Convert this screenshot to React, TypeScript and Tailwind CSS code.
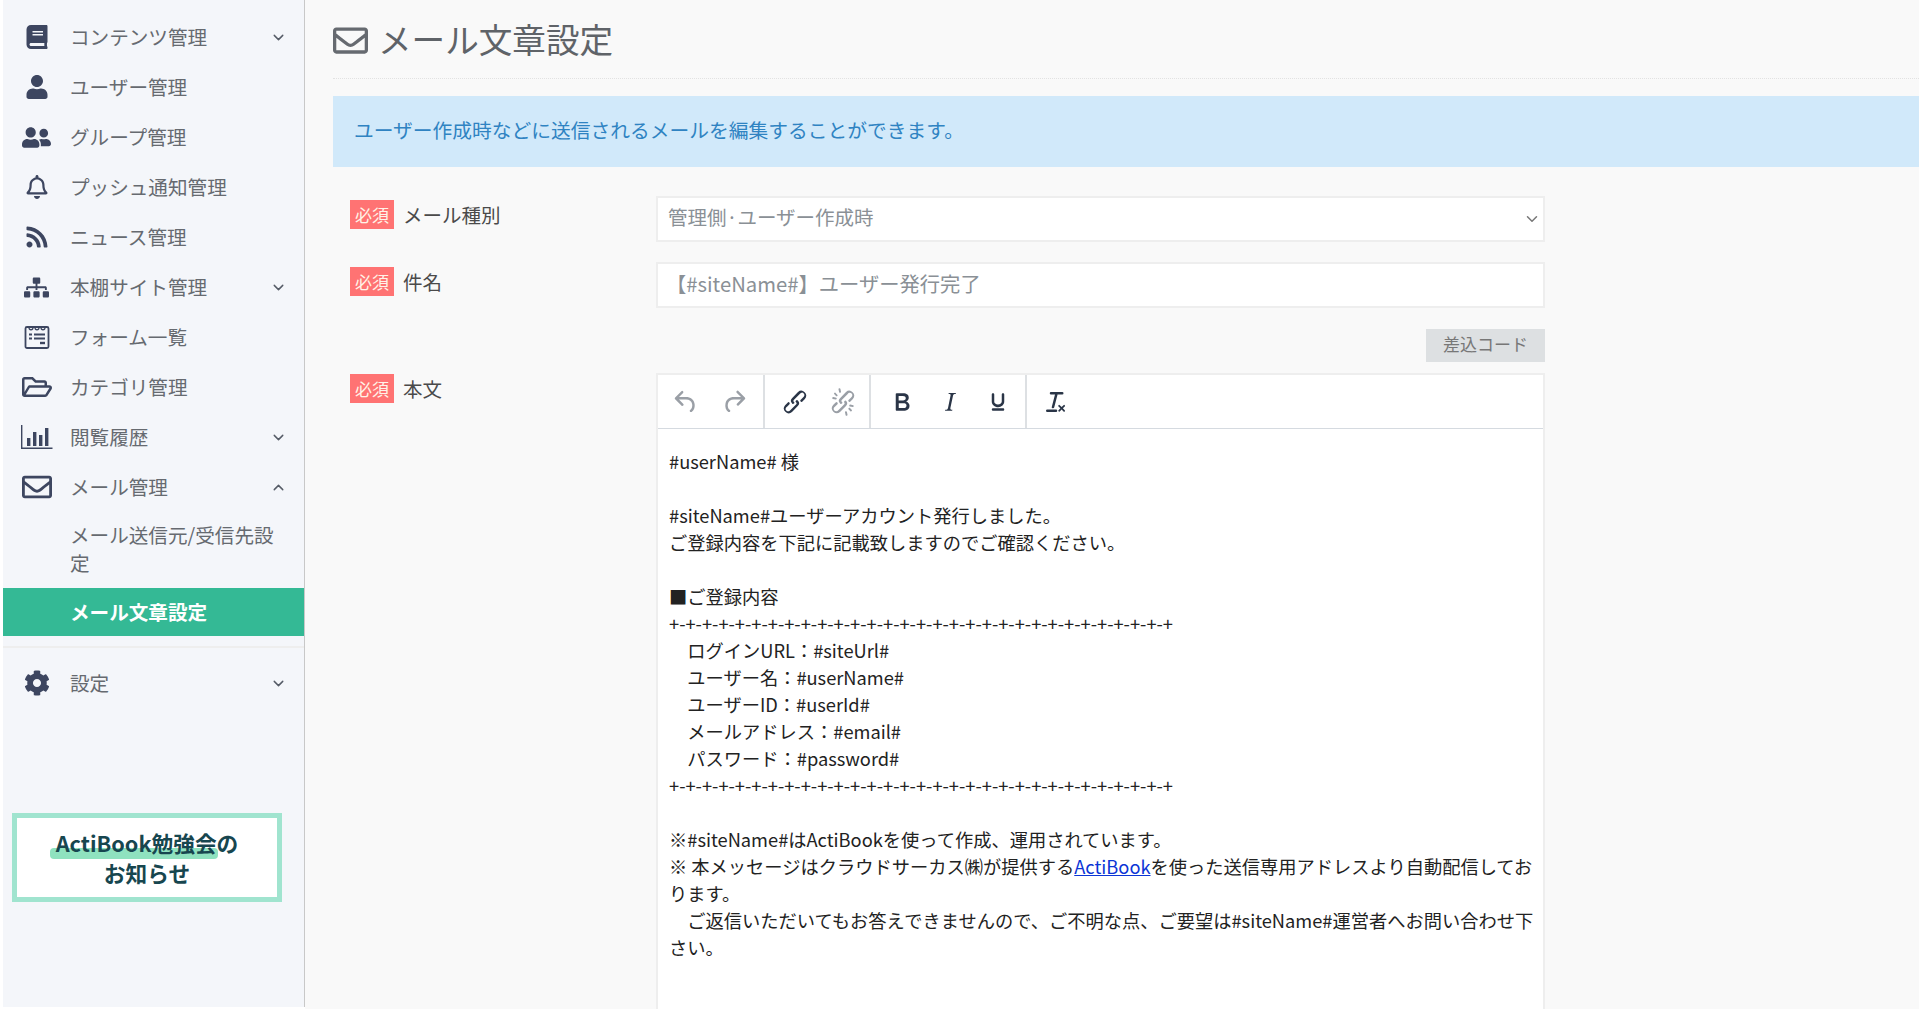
import { useState } from 'react';
import {
    FaBook,
    FaUser,
    FaUserFriends,
    FaRegBell,
    FaRss,
    FaSitemap,
    FaRegFolderOpen,
    FaRegEnvelope,
    FaCog,
} from 'react-icons/fa';
import { ChevronDown, ChevronUp } from 'lucide-react';

const JP = "font-['Noto_Sans_CJK_JP','Noto_Sans',sans-serif]";

function FormIcon() {
    return (
        <svg width="26" height="25" viewBox="0 0 26 25" fill="none" stroke="currentColor" strokeWidth="1.8">
            <rect x="1.5" y="2" width="23" height="21" rx="1.5" />
            <path d="M5 2.5c0 3 4 3 4 0M11 2.5c0 3 4 3 4 0M17 2.5c0 3 4 3 4 0" strokeWidth="1.3" />
            <path d="M5 9.5h3M10 9.5h11M5 13.5h3M10 13.5h11" strokeWidth="1.8" />
            <path d="M16 18h5" strokeWidth="2.4" />
        </svg>
    );
}

function ChartIcon() {
    return (
        <svg width="33" height="25" viewBox="0 0 33 25" fill="currentColor">
            <path d="M1 0h1.4v22.6H32.5V24H1z" />
            <rect x="7" y="13" width="3.4" height="8" />
            <rect x="13" y="7" width="3.4" height="14" />
            <rect x="19" y="10" width="3.4" height="11" />
            <rect x="25" y="3" width="3.4" height="18" />
        </svg>
    );
}

const navItems = [
    { label: 'コンテンツ管理', icon: <FaBook size={24} />, chevron: 'down' },
    { label: 'ユーザー管理', icon: <FaUser size={24} /> },
    { label: 'グループ管理', icon: <FaUserFriends size={29} /> },
    { label: 'プッシュ通知管理', icon: <FaRegBell size={24} /> },
    { label: 'ニュース管理', icon: <FaRss size={24} /> },
    { label: '本棚サイト管理', icon: <FaSitemap size={25} />, chevron: 'down' },
    { label: 'フォーム一覧', icon: <FormIcon /> },
    { label: 'カテゴリ管理', icon: <FaRegFolderOpen size={30} /> },
    { label: '閲覧履歴', icon: <ChartIcon />, chevron: 'down' },
    { label: 'メール管理', icon: <FaRegEnvelope size={30} />, chevron: 'up' },
];

function NavRow({ label, icon, chevron }: { label: string; icon: React.ReactNode; chevron?: string }) {
    return (
        <div className="h-[50px] flex items-center">
            <div className="w-[67px] flex justify-center items-center text-[#3d4660]">{icon}</div>
            <span className="flex-1 text-[19.6px] text-[#666a70] pb-[1px]">{label}</span>
            {chevron === 'down' && <ChevronDown className="w-[17px] h-[17px] mr-[17px] text-[#555b66]" />}
            {chevron === 'up' && <ChevronUp className="w-[17px] h-[17px] mr-[17px] text-[#555b66]" />}
        </div>
    );
}

function Sidebar() {
    return (
        <aside className="w-[302px] shrink-0 ml-[3px] mb-[2px] bg-[#f4f6fa] border-r border-[#c8c8c8] pt-[12px] flex flex-col">
            {navItems.map((item) => (
                <NavRow key={item.label} {...item} />
            ))}
            <div className="pl-[67px] pr-[20px] pt-[9px] pb-[11px] text-[19.6px] leading-[28px] text-[#666a70]">
                メール送信元/受信先設定
            </div>
            <div className="h-[48px] flex items-center pl-[67px] pb-[1px] bg-[#34b995] text-white text-[19.6px] font-bold">
                メール文章設定
            </div>
            <div className="mt-[10px] border-t-2 border-[#eeeeee]" />
            <div className="mt-[10px]">
                <NavRow label="設定" icon={<FaCog size={26} />} chevron="down" />
            </div>
            <div className="mt-[105px] ml-[9px] w-[270px] h-[89px] border-[5px] border-[#a0e4cf] bg-white flex flex-col items-center justify-center text-[21.7px] leading-[30px] font-bold text-[#17464f]">
                <span className="relative">
                    <span className="absolute left-[-6px] top-[20px] w-[168px] h-[11px] bg-[#8fe2bf] rounded-sm" />
                    <span className="relative">ActiBook勉強会の</span>
                </span>
                <span>お知らせ</span>
            </div>
        </aside>
    );
}

function RequiredLabel({ text }: { text: string }) {
    return (
        <div className="w-[323px] pl-[17px] flex items-center gap-[9px] h-[29px] shrink-0">
            <span className="w-[44px] h-[29px] bg-[#ff7373] text-[#fff3e8] text-[17px] flex items-center justify-center">必須</span>
            <span className="text-[19.5px] text-[#4a4a4a] pt-[1px]">{text}</span>
        </div>
    );
}

const toolIcons = {
    undo: 'M6.4 8H12c3.7 0 6.2 2 6.8 5.1.6 2.7-.4 5.6-2.3 6.8a1 1 0 0 1-1-1.8c1.1-.6 1.8-2.7 1.4-4.6-.5-2.1-2.1-3.5-4.9-3.5H6.4l3.3 3.3a1 1 0 1 1-1.4 1.4l-5-5a1 1 0 0 1 0-1.4l5-5a1 1 0 0 1 1.4 1.4L6.4 8z',
    redo: 'M17.6 10H12c-2.8 0-4.4 1.4-4.9 3.5-.4 2 .3 4 1.4 4.6a1 1 0 1 1-1 1.8c-2-1.2-2.9-4.1-2.3-6.8.6-3 3-5.1 6.8-5.1h5.6l-3.3-3.3a1 1 0 1 1 1.4-1.4l5 5a1 1 0 0 1 0 1.4l-5 5a1 1 0 0 1-1.4-1.4l3.3-3.3z',
    link: 'M6.2 12.3a1 1 0 0 1 1.4 1.4l-2 2a2 2 0 1 0 2.6 2.8l4.8-4.8a1 1 0 0 0 0-1.4 1 1 0 1 1 1.4-1.3 2.9 2.9 0 0 1 0 4L9.6 20a3.9 3.9 0 0 1-5.5-5.5l2-2zm11.6-.6a1 1 0 0 1-1.4-1.4l2-2a2 2 0 1 0-2.6-2.8L11 10.3a1 1 0 0 0 0 1.4A1 1 0 1 1 9.6 13a2.9 2.9 0 0 1 0-4L14.4 4a3.9 3.9 0 0 1 5.5 5.5l-2 2z',
    unlink: 'M6.2 12.3a1 1 0 0 1 1.4 1.4l-2.1 2a2 2 0 1 0 2.7 2.8l4.8-4.8a1 1 0 0 0 0-1.4 1 1 0 0 1 1.4-1.3 2.9 2.9 0 0 1 0 4.1l-4.8 4.8a3.9 3.9 0 0 1-5.5-5.5l2-2zm11.6-.6a1 1 0 0 1-1.4-1.4l2.1-2a2 2 0 1 0-2.7-2.8L11 10.3a1 1 0 0 0 0 1.4 1 1 0 1 1-1.4 1.3 2.9 2.9 0 0 1 0-4.1L14.4 4a3.9 3.9 0 0 1 5.5 5.5l-2 2zM7.6 6.3a.8.8 0 0 1-1 1.1L4.9 5.6a.8.8 0 0 1 1-1.1l1.7 1.8zm2.8-2.5a.8.8 0 0 1-1.5.4l-.5-2.4a.8.8 0 0 1 1.5-.4l.5 2.4zM6.6 8.5a.8.8 0 0 1-.4 1.5l-2.4-.5a.8.8 0 0 1 .4-1.5l2.4.5zm9.8 9.2a.8.8 0 0 1 1-1.1l1.7 1.8a.8.8 0 0 1-1 1.1l-1.7-1.8zm-2.8 2.5a.8.8 0 0 1 1.5-.4l.5 2.4a.8.8 0 0 1-1.5.4l-.5-2.4zm3.8-4.7a.8.8 0 0 1 .4-1.5l2.4.5a.8.8 0 0 1-.4 1.5l-2.4-.5z',
    bold: 'M7.8 19c-.3 0-.5 0-.6-.2l-.2-.5V5.7c0-.2 0-.4.2-.5l.6-.2h5c1.5 0 2.7.3 3.5 1 .7.6 1.1 1.4 1.1 2.5a3 3 0 0 1-.6 1.9c-.4.6-1 1-1.6 1.2.4.1.9.3 1.3.6s.8.7 1 1.2c.4.4.5 1 .5 1.6 0 1.3-.4 2.3-1.3 3-.8.7-2.1 1-3.8 1H7.8zm5-8.3c.6 0 1.2-.1 1.6-.5.4-.3.6-.7.6-1.3 0-1.1-.8-1.7-2.3-1.7H9.3v3.5h3.4zm.5 6c.7 0 1.3-.1 1.7-.4.4-.4.6-.9.6-1.5s-.2-1-.7-1.4c-.4-.3-1-.4-2-.4H9.4v3.8h4z',
    italic: 'M16.7 4.7l-.1.9h-.3c-.6 0-1 0-1.4.3-.3.3-.4.6-.5 1.1l-2.1 9.8v.6c0 .5.4.8 1.4.8h.2l-.2.8H8l.2-.8h.2c1.1 0 1.8-.5 2-1.5l2-9.8.1-.5c0-.6-.4-.8-1.4-.8h-.3l.2-.9h5.8z',
    underline: 'M16 5c.6 0 1 .4 1 1v5.5a4 4 0 0 1-.4 1.8l-1 1.4a5.3 5.3 0 0 1-5.5 1 5 5 0 0 1-1.6-1c-.5-.4-.8-.9-1.1-1.4a4 4 0 0 1-.4-1.8V6c0-.6.4-1 1-1s1 .4 1 1v5.5c0 .3 0 .6.2 1l.6.7a3.3 3.3 0 0 0 2.2.8 3.4 3.4 0 0 0 2.2-.8c.3-.2.4-.5.6-.8l.2-.9V6c0-.6.4-1 1-1zM8 17h8c.6 0 1 .4 1 1s-.4 1-1 1H8a1 1 0 0 1 0-2z',
    clear: 'M13.2 6a1 1 0 0 1 0 .2l-2.6 10a1 1 0 0 1-1 .8h-.2a.8.8 0 0 1-.8-1l2.6-10H8a1 1 0 1 1 0-2h9a1 1 0 0 1 0 2h-3.8zM5 18h7a1 1 0 0 1 0 2H5a1 1 0 0 1 0-2zm13 1.5L16.5 18 15 19.5a.7.7 0 0 1-1-1l1.5-1.5-1.5-1.5a.7.7 0 0 1 1-1l1.5 1.5 1.5-1.5a.7.7 0 0 1 1 1L17.5 17l1.5 1.5a.7.7 0 0 1-1 1z',
};

function ToolButton({ name, disabled }: { name: keyof typeof toolIcons; disabled?: boolean }) {
    return (
        <button className="w-[48px] h-[54px] flex items-center justify-center">
            <svg width="30" height="30" viewBox="0 0 24 24" className={disabled ? 'text-[#9a9fa6]' : 'text-[#2a3547]'} fill="currentColor">
                <path d={toolIcons[name]} fillRule="evenodd" />
            </svg>
        </button>
    );
}

function Editor() {
    const dashes = '+-'.repeat(30) + '+';
    return (
        <div className="flex-1 border-2 border-b-0 border-[#eeeeee] bg-white min-h-[800px]">
            <div className="h-[54px] flex border-b border-[#d5dae0]">
                <div className="flex pl-[4px] pr-[5px] border-r-2 border-[#dde0e3]">
                    <ToolButton name="undo" disabled />
                    <ToolButton name="redo" disabled />
                </div>
                <div className="flex pl-[6px] pr-[2px] border-r-2 border-[#dde0e3]">
                    <ToolButton name="link" />
                    <ToolButton name="unlink" disabled />
                </div>
                <div className="flex pl-[7px] pr-[3px] border-r-2 border-[#dde0e3]">
                    <ToolButton name="bold" />
                    <ToolButton name="italic" />
                    <ToolButton name="underline" />
                </div>
                <div className="flex pl-[5px]">
                    <ToolButton name="clear" />
                </div>
            </div>
            <div className="pl-[11px] pr-[8px] pt-[19px] text-[18.25px] leading-[27px] text-[#222222]">
                <p>#userName# 様</p>
                <p>&nbsp;</p>
                <p>#siteName#ユーザーアカウント発行しました。</p>
                <p>ご登録内容を下記に記載致しますのでご確認ください。</p>
                <p>&nbsp;</p>
                <p>■ご登録内容</p>
                <p>{dashes}</p>
                <p>　ログインURL：#siteUrl#</p>
                <p>　ユーザー名：#userName#</p>
                <p>　ユーザーID：#userId#</p>
                <p>　メールアドレス：#email#</p>
                <p>　パスワード：#password#</p>
                <p>{dashes}</p>
                <p>&nbsp;</p>
                <p>※#siteName#はActiBookを使って作成、運用されています。</p>
                <p>
                    ※ 本メッセージはクラウドサーカス㈱が提供する
                    <a className="text-[#0b35d6] underline">ActiBook</a>
                    を使った送信専用アドレスより自動配信しております。
                </p>
                <p>　ご返信いただいてもお答えできませんので、ご不明な点、ご要望は#siteName#運営者へお問い合わせ下さい。</p>
            </div>
        </div>
    );
}

export default function App() {
    const [mailType] = useState('管理側·ユーザー作成時');
    const [subject] = useState('【#siteName#】ユーザー発行完了');

    return (
        <div className={`h-[1009px] w-full flex bg-white overflow-hidden ${JP}`}>
            <Sidebar />
            <main className="flex-1 min-w-0 bg-[#f9f9f9] pl-[28px]">
                <h1 className="h-[79px] border-b border-dotted border-[#e2e2e2] flex items-center gap-[10px] text-[33.6px] text-[#5f6368]">
                    <FaRegEnvelope size={35} className="text-[#666a70] mt-[3px]" />
                    メール文章設定
                </h1>
                <div className="mt-[17px] h-[71px] flex items-center pl-[21px] pb-[4px] bg-[#d1e9fa] text-[19.75px] text-[#2f83c2]">
                    ユーザー作成時などに送信されるメールを編集することができます。
                </div>

                <div className="w-[1212px] pt-[29px]">
                    <div className="flex h-[46px]">
                        <div className="pt-[4px]"><RequiredLabel text="メール種別" /></div>
                        <div className="flex-1 flex items-center justify-between border-2 border-[#eeeeee] bg-white pl-[10px] pr-[2px] pb-[4px] text-[19.5px] text-[#8a9096]">
                            <span>{mailType}</span>
                            <ChevronDown className="w-[18px] h-[18px] mt-[4px] text-[#777777]" />
                        </div>
                    </div>
                    <div className="flex h-[46px] mt-[20px]">
                        <div className="pt-[5px]"><RequiredLabel text="件名" /></div>
                        <div className="flex-1 flex items-center border-2 border-[#eeeeee] bg-white pl-[8px] pb-[3px] text-[20.3px] text-[#8a9096]">
                            {subject}
                        </div>
                    </div>
                    <div className="flex justify-end mt-[21px]">
                        <button className="w-[119px] h-[33px] pb-[3px] bg-[#dde0e2] text-[#777777] text-[17px] flex items-center justify-center">差込コード</button>
                    </div>
                    <div className="flex mt-[11px]">
                        <div className="pt-[1px]"><RequiredLabel text="本文" /></div>
                        <Editor />
                    </div>
                </div>
            </main>
        </div>
    );
}
